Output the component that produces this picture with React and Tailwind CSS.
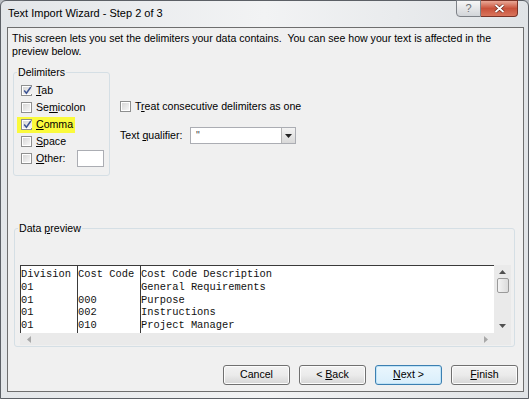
import React from "react";

const rows = [
  ["Division", "Cost Code", "Cost Code Description"],
  ["01", "", "General Requirements"],
  ["01", "000", "Purpose"],
  ["01", "002", "Instructions"],
  ["01", "010", "Project Manager"],
];

function Check({ checked }) {
  return (
    <span className="w-[11px] h-[11px] shrink-0 border border-[#8e8f8f] bg-white p-[1px] flex">
      <span className="flex-1 bg-linear-to-br from-[#d8d8d8] to-[#f6f6f6] flex items-center justify-center">
        {checked && (
          <svg width="9" height="9" viewBox="0 0 9 9">
            <path d="M1.2 4.6 L3.4 7.2 L7.8 1" stroke="#3d5494" strokeWidth="1.5" fill="none" />
          </svg>
        )}
      </span>
    </span>
  );
}

function U({ children }) {
  return <span className="underline underline-offset-[1px]">{children}</span>;
}

function Arrow({ dir, color = "#505050" }) {
  const pts = {
    up: "0,4 3.5,0 7,4",
    down: "0,0 3.5,4 7,0",
    left: "4,0 0,3.5 4,7",
    right: "0,0 4,3.5 0,7",
  }[dir];
  const vertical = dir === "up" || dir === "down";
  return (
    <svg width={vertical ? 7 : 4} height={vertical ? 4 : 7}>
      <polygon points={pts} fill={color} />
    </svg>
  );
}

function Button({ children, focused }) {
  return (
    <button
      className={
        "w-[67px] h-[20px] rounded-[3px] border text-black flex items-center justify-center " +
        (focused
          ? "border-[#3c7fb1] bg-linear-to-b from-[#eaf6fd] to-[#d9eefb] shadow-[inset_0_0_0_1px_#bfe3f7]"
          : "border-[#707070] bg-linear-to-b from-[#f2f2f2] via-[#ebebeb] to-[#d6d6d6] shadow-[inset_0_0_0_1px_#fcfcfc]")
      }
    >
      <span className="whitespace-pre">{children}</span>
    </button>
  );
}

export default function App() {
  return (
    <div className="w-[529px] h-[399px] bg-[#b9bdc2] font-['Liberation_Sans',Arial,sans-serif] text-[10.6px] text-black">
      <div className="w-full h-full flex flex-col border border-[#5c6066] rounded-t-[6px] bg-linear-to-r from-[#e3e6e9] via-[#f2f3f4] to-[#e0e3e6] pl-[6px] pr-[4px] pb-[6px]">
        {/* title bar */}
        <div className="h-[26px] flex items-start justify-between">
          <div className="pl-[1px] pt-[6px] text-[11px] leading-[13px] text-black">Text Import Wizard - Step 2 of 3</div>
          <div className="flex mr-[6px] -mt-[1px]">
            <div className="w-[25px] h-[17px] rounded-bl-[4px] border border-[#7d8187] bg-linear-to-b from-[#f7f7f7] to-[#d2d5d9] flex items-center justify-center text-[11px] text-[#6b6f75]">
              ?
            </div>
            <div className="w-[37px] h-[17px] rounded-br-[4px] border border-l-0 border-[#7a3226] bg-linear-to-b from-[#e9a897] via-[#c8513a] to-[#d9745c] flex items-center justify-center">
              <svg width="11" height="9" viewBox="0 0 11 9">
                <path d="M1.5 1 L9.5 8 M9.5 1 L1.5 8" stroke="#5a1e14" strokeWidth="3" />
                <path d="M1.5 1 L9.5 8 M9.5 1 L1.5 8" stroke="#ffffff" strokeWidth="1.8" />
              </svg>
            </div>
          </div>
        </div>

        {/* client area */}
        <div className="flex-1 border border-[#6e6e6e] bg-[#f0f0f0] flex flex-col">
          <p className="ml-[4px] mt-[4px] leading-[13px] w-[490px]">
            This screen lets you set the delimiters your data contains.&nbsp; You can see how your text is affected in the
            preview below.
          </p>

          <div className="flex mt-[8px]">
            <fieldset className="ml-[5px] w-[97px] h-[110px] border border-[#d5dfe5] rounded-[3px]">
              <legend className="ml-[3px] px-[1px] leading-[13px]">Delimiters</legend>
              <div className="mt-[3px] flex flex-col">
                <div className="h-[17px] pl-[7px] flex items-center gap-[4px]">
                  <Check checked />
                  <span><U>T</U>ab</span>
                </div>
                <div className="h-[17px] pl-[7px] flex items-center gap-[4px]">
                  <Check />
                  <span>Se<U>m</U>icolon</span>
                </div>
                <div className="h-[17px] pl-[3px] flex items-center">
                  <div className="w-[58px] h-[16px] bg-[#fafa3c] pl-[4px] flex items-center gap-[4px]">
                    <Check checked />
                    <span><U>C</U>omma</span>
                  </div>
                </div>
                <div className="h-[17px] pl-[7px] flex items-center gap-[4px]">
                  <Check />
                  <span><U>S</U>pace</span>
                </div>
                <div className="h-[17px] pl-[7px] flex items-center gap-[4px]">
                  <Check />
                  <span className="w-[37px]"><U>O</U>ther:</span>
                  <span className="w-[27px] h-[17px] border border-[#abadb3] bg-white" />
                </div>
              </div>
            </fieldset>

            <div className="ml-[10px] flex flex-col">
              <div className="mt-[34px] h-[13px] flex items-center gap-[4px]">
                <Check />
                <span>T<U>r</U>eat consecutive delimiters as one</span>
              </div>
              <div className="mt-[14px] h-[17px] flex items-center">
                <span className="w-[70px]">Text <U>q</U>ualifier:</span>
                <div className="w-[106px] h-[17px] border border-[#abadb3] bg-white flex">
                  <span className="flex-1 pl-[5px] leading-[15px] text-[#444]">"</span>
                  <span className="w-[14px] border-l border-[#b5b5b5] bg-linear-to-b from-[#f3f3f3] to-[#d9d9d9] flex items-center justify-center">
                    <Arrow dir="down" color="#222" />
                  </span>
                </div>
              </div>
            </div>
          </div>

          <fieldset className="mt-[46px] ml-[6px] w-[501px] h-[125px] border border-[#d5dfe5] rounded-[3px]">
            <legend className="ml-[3px] px-[1px] leading-[13px]">
              Data <U>p</U>review
            </legend>
            <div className="ml-[5px] mt-[30px] w-[491px] h-[80px] flex flex-col">
              <div className="flex h-[68px]">
                <div className="flex-1 bg-white border-t border-l border-[#3a3a3a] flex font-['Liberation_Mono','Courier_New',monospace] text-[10.4px] leading-[12.75px] text-[#111] whitespace-pre">
                  {[57, 63, 0].map((w, ci) => (
                    <div
                      key={ci}
                      className={ci < 2 ? "border-r border-[#3a3a3a] pt-[2px]" : "flex-1 pt-[2px]"}
                      style={ci < 2 ? { width: w } : undefined}
                    >
                      {rows.map((r, ri) => (
                        <div key={ri}>{r[ci] || " "}</div>
                      ))}
                    </div>
                  ))}
                </div>
                <div className="w-[17px] bg-[#eaeaea] flex flex-col items-center pt-[5px] pb-[5px]">
                  <Arrow dir="up" />
                  <div className="mt-[4px] w-[12px] h-[15px] rounded-[2px] border border-[#9a9a9a] bg-linear-to-r from-[#f4f4f4] to-[#dcdcdc]" />
                  <div className="flex-1" />
                  <Arrow dir="down" />
                </div>
              </div>
              <div className="h-[12px] flex">
                <div className="flex-1 bg-[#eaeaea] flex items-center justify-between pl-[7px] pr-[6px]">
                  <Arrow dir="left" color="#a8a8a8" />
                  <Arrow dir="right" color="#a8a8a8" />
                </div>
                <div className="w-[17px] bg-[#eaeaea]" />
              </div>
            </div>
          </fieldset>

          <div className="mt-[18px] pr-[5px] flex justify-end gap-[9px]">
            <Button>Cancel</Button>
            <Button>&lt; <U>B</U>ack</Button>
            <Button focused><U>N</U>ext &gt;</Button>
            <Button><U>F</U>inish</Button>
          </div>
        </div>
      </div>
    </div>
  );
}
